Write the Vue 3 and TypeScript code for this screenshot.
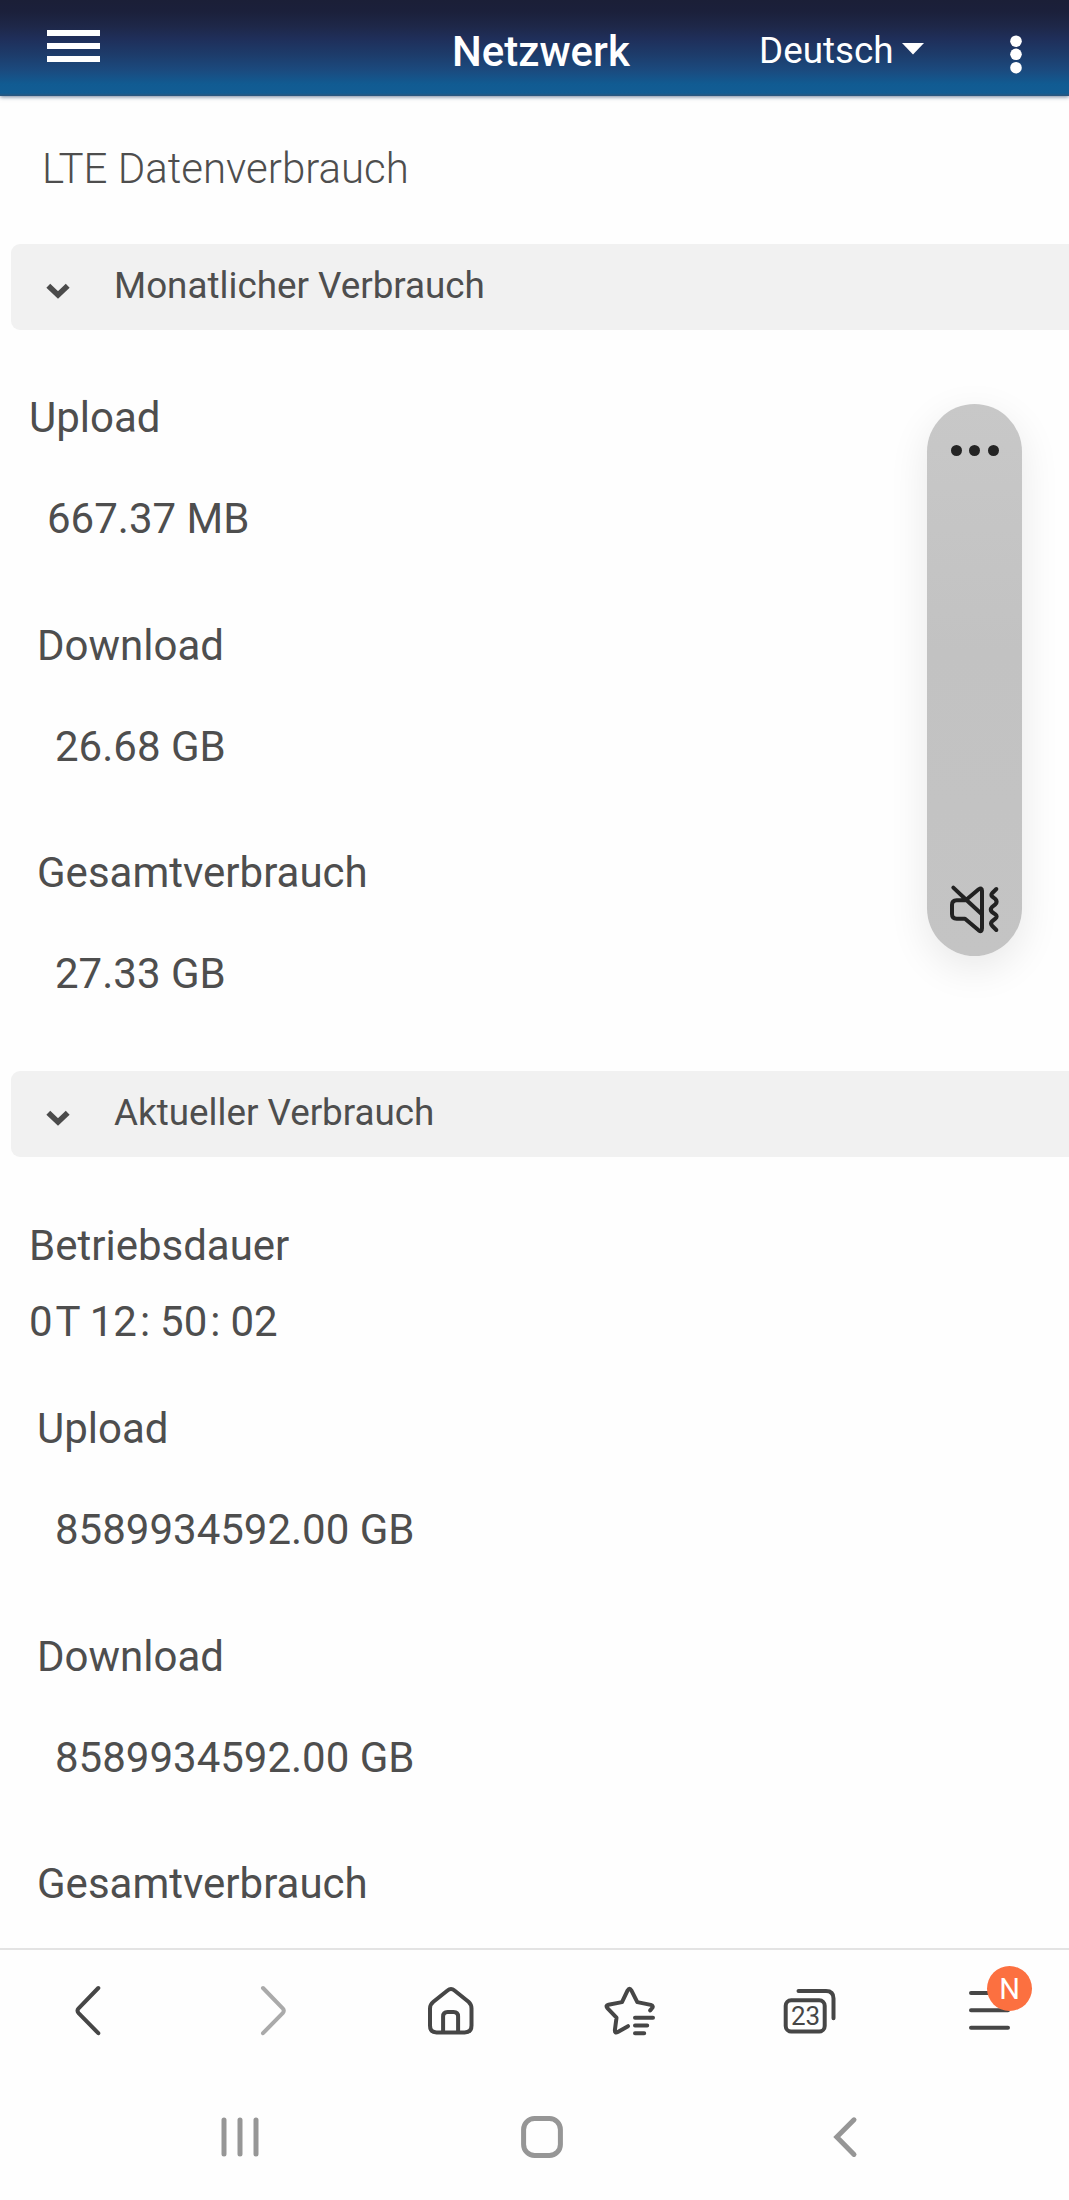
<script setup lang="ts">
interface Usage {
  label: string
  value: string
}

const monthly: Usage[] = [
  { label: 'Upload', value: '667.37 MB' },
  { label: 'Download', value: '26.68 GB' },
  { label: 'Gesamtverbrauch', value: '27.33 GB' },
]

const current: Usage[] = [
  { label: 'Upload', value: '8589934592.00 GB' },
  { label: 'Download', value: '8589934592.00 GB' },
]
</script>

<template>
  <div class="screen">
    <header class="topbar">
      <div class="burger"><i></i><i></i><i></i></div>
      <div class="title">Netzwerk</div>
      <div class="lang">Deutsch</div>
      <svg class="caret" width="22" height="12" viewBox="0 0 22 12"><path d="M0 0H22L11 11.6Z" fill="#fff" /></svg>
      <svg class="kebab" width="12" height="40" viewBox="0 0 12 40" fill="#fff">
        <circle cx="6" cy="6.2" r="5.8" />
        <circle cx="6" cy="19.3" r="5.8" />
        <circle cx="6" cy="32.7" r="5.8" />
      </svg>
    </header>

    <main class="content">
      <h1 class="heading">LTE Datenverbrauch</h1>

      <div class="section">
        <svg class="chev" width="24" height="16" viewBox="0 0 24 16"><path d="M2.3 2.8L12 12L21.7 2.8" fill="none" stroke="#4b4b4b" stroke-width="5.6" /></svg>
        <span>Monatlicher Verbrauch</span>
      </div>
      <div class="list">
        <div v-for="item in monthly" :key="item.label" class="item">
          <div class="line">{{ item.label }}</div>
          <div class="line value">{{ item.value }}</div>
        </div>
      </div>

      <div class="section">
        <svg class="chev" width="24" height="16" viewBox="0 0 24 16"><path d="M2.3 2.8L12 12L21.7 2.8" fill="none" stroke="#4b4b4b" stroke-width="5.6" /></svg>
        <span>Aktueller Verbrauch</span>
      </div>
      <div class="list second">
        <div class="line uptime">Betriebsdauer</div>
        <div class="line clock">
          <span>0</span><span class="unit">T</span><span class="num first">12</span><span class="unit">:</span><span class="num">50</span><span class="unit">:</span><span class="num">02</span>
        </div>
        <div v-for="item in current" :key="item.label" class="item">
          <div class="line">{{ item.label }}</div>
          <div class="line value">{{ item.value }}</div>
        </div>
        <div class="item"><div class="line">Gesamtverbrauch</div></div>
      </div>
    </main>

    <nav class="browser">
      <svg class="ic back" width="50" height="60" viewBox="0 0 50 60"><path d="M35.3 8L15.600 28.3Q13.500 30.700 15.600 33.1L35.3 53.200" /></svg>
      <svg class="ic fwd" width="50" height="60" viewBox="0 0 50 60"><path d="M15 8L34.700 28.3Q36.800 30.700 34.700 33.1L15 53.200" /></svg>
      <svg class="ic home" width="60" height="60" viewBox="0 0 60 60">
        <path d="M27.500 10.500Q31 7.500 34.500 10.500L48.500 21.800Q51.500 24.500 51.500 28.500V45.500Q51.500 52.400 44.600 52.400H16.600Q10 52.400 10 45.500V28.500Q10 24.500 13.400 21.800Z" />
        <path d="M23.100 52V36.500Q23.100 32 27.600 32H33.600Q38.100 32 38.100 36.500V52" />
      </svg>
      <svg class="ic star" width="60" height="60" viewBox="0 0 60 60">
        <path d="M32 46.200L21.800 52Q18.600 53.600 18.900 50L20.500 37.700L11.400 28.200Q9.300 25.300 12.400 24.700L26 22.100L31.600 10.400Q33.500 7 35.400 10.400L41.300 22.100L54.800 24.900Q58 26 56 28.300L54.200 30.400" />
        <path d="M39 37.800H57M39 45.400H51.200M39 53.200H48.200" />
      </svg>
      <div class="tabs">
        <svg class="ic" width="60" height="60" viewBox="0 0 60 60">
          <rect x="9.700" y="20.300" width="39" height="31.200" rx="5.500" />
          <path d="M22.500 11H50Q57.500 11 57.500 18.500V38.300" />
        </svg>
        <span class="count">23</span>
      </div>
      <div class="menu">
        <svg class="ic" width="60" height="60" viewBox="0 0 60 60"><path d="M11 13H48M11 30.300H48M11 47.700H48" /></svg>
        <span class="badge">N</span>
      </div>
    </nav>

    <footer class="system">
      <svg class="sys recents" width="44" height="48" viewBox="0 0 44 48"><path d="M6 7V41M22 7V41M38 7V41" /></svg>
      <svg class="sys" width="48" height="48" viewBox="0 0 48 48"><rect x="5.600" y="5.600" width="36.800" height="36.800" rx="11" /></svg>
      <svg class="sys prev" width="44" height="48" viewBox="0 0 44 48"><path d="M33 6.800L15.800 24L33 41.400" /></svg>
    </footer>

    <aside class="volume">
      <div class="more"><i></i><i></i><i></i></div>
      <svg class="mute" width="56" height="52" viewBox="0 0 168 156">
        <path d="M28 14L64 48L112 92M65 52L104 19Q114 12 114 23V136Q114 149 104 142L63 107H38Q24 107 24 93V66Q24 52 38 52Z" />
        <path d="M157 18L145 30Q139 36 145 41L154 48Q162 56 154 64L144 72Q137 80 144 87L154 94Q162 101 154 107L144 115Q138 122 145 129L157 141" />
      </svg>
    </aside>
  </div>
</template>

<style>
html,
body {
  margin: 0;
  background: #fefefe;
}
</style>

<style scoped>
.screen {
  position: relative;
  display: flex;
  flex-direction: column;
  width: 1069px;
  height: 2200px;
  overflow: hidden;
  background: #fefefe;
  color: #4e4e4e;
  font-family: Roboto, sans-serif;
  font-size: 42px;
}
.topbar {
  display: flex;
  align-items: flex-start;
  flex: none;
  box-sizing: border-box;
  height: 96px;
  padding-left: 47px;
  background: linear-gradient(#1b1f37 0, #1b203b 12px, #1e2849 27px, #1f2e59 38px, #1d3c6b 55px, #1b4a7e 70px, #115b92 84px, #125d94 93px, #2c567c 96px);
  box-shadow: 0 1px 4px rgba(20, 50, 90, 0.6);
  color: #fff;
  white-space: nowrap;
}
.burger {
  display: flex;
  flex-direction: column;
  gap: 7.500px;
  width: 53px;
  padding-top: 30px;
}
.burger i {
  height: 5.500px;
  background: #fff;
}
.title {
  width: 179px;
  margin: 27px 0 0 352px;
  font-weight: 500;
  line-height: 50px;
}
.lang {
  width: 133px;
  margin: 26px 0 0 128px;
  font-size: 36.800px;
  line-height: 50px;
}
.caret {
  margin: 43px 0 0 10px;
}
.kebab {
  margin: 34.500px 0 0 86px;
}
.content {
  flex: none;
  height: 1852px;
  overflow: hidden;
}
.heading {
  margin: 48px 0 50px 42px;
  font-size: 42px;
  font-weight: 300;
  line-height: 50px;
}
.section {
  display: flex;
  align-items: flex-start;
  box-sizing: border-box;
  height: 86px;
  margin-left: 11px;
  padding-left: 35px;
  border-radius: 9px 0 0 9px;
  background: #f1f1f1;
  font-size: 36.800px;
  line-height: 50px;
  white-space: nowrap;
}
.chev {
  margin-top: 39px;
}
.section span {
  margin: 17px 0 0 44px;
}
.list {
  box-sizing: border-box;
  height: 741px;
  padding: 63px 0 0 37px;
}
.item {
  display: flex;
  flex-direction: column;
  gap: 51px;
  height: 227.600px;
}
.line {
  height: 50px;
  line-height: 50px;
  white-space: nowrap;
}
.value {
  margin-left: 18px;
}
.list .item:first-child {
  margin-left: -8px;
}
.second {
  height: auto;
  padding-top: 64px;
}
.uptime {
  margin-left: -8px;
}
.clock {
  display: flex;
  margin: 26px 0 57px -8px;
}
.unit {
  margin-left: 3px;
}
.num {
  margin-left: 10px;
}
.num.first {
  margin-left: 9px;
}
.browser {
  display: flex;
  flex: none;
  box-sizing: border-box;
  height: 142px;
  padding-top: 30px;
  border-top: 2px solid #e3e3e3;
}
.ic {
  display: block;
  flex: none;
  fill: none;
  stroke: #464646;
  stroke-width: 4;
  stroke-linecap: round;
  stroke-linejoin: round;
}
.back {
  margin-left: 63px;
}
.fwd {
  margin-left: 135px;
  stroke: #aaa;
}
.home {
  margin-left: 122px;
}
.star {
  margin-left: 116px;
}
.tabs {
  position: relative;
  margin-left: 120px;
}
.count {
  position: absolute;
  left: 10px;
  top: 21px;
  width: 39px;
  text-align: center;
  font-size: 26px;
  line-height: 30px;
  color: #464646;
}
.menu {
  position: relative;
  margin-left: 124px;
}
.badge {
  position: absolute;
  left: 27px;
  top: -14px;
  width: 45px;
  height: 45px;
  border-radius: 50%;
  background: #fc7040;
  color: #fff;
  text-align: center;
  font-size: 29px;
  line-height: 47px;
}
.system {
  display: flex;
  flex: 1;
  align-items: flex-start;
  padding-top: 23px;
}
.sys {
  flex: none;
  fill: none;
  stroke: #969696;
  stroke-width: 5;
  stroke-linecap: round;
  stroke-linejoin: miter;
}
.recents {
  margin: 0 256px 0 218px;
}
.prev {
  margin-left: 255px;
}
.volume {
  position: absolute;
  left: 927px;
  top: 404px;
  display: flex;
  flex-direction: column;
  align-items: center;
  justify-content: space-between;
  box-sizing: border-box;
  width: 95px;
  height: 552px;
  padding: 41px 0 21px;
  border-radius: 48px;
  background: linear-gradient(#c8c8c8, #c2c2c2 45%, #c4c4c4);
  box-shadow: 0 12px 40px rgba(0, 0, 0, 0.09);
}
.more {
  display: flex;
  gap: 7.500px;
}
.more i {
  width: 11px;
  height: 11px;
  border-radius: 50%;
  background: #242424;
}
.mute {
  margin-right: 6px;
  fill: none;
  stroke: #222;
  stroke-width: 12;
  stroke-linecap: round;
  stroke-linejoin: round;
}
</style>
